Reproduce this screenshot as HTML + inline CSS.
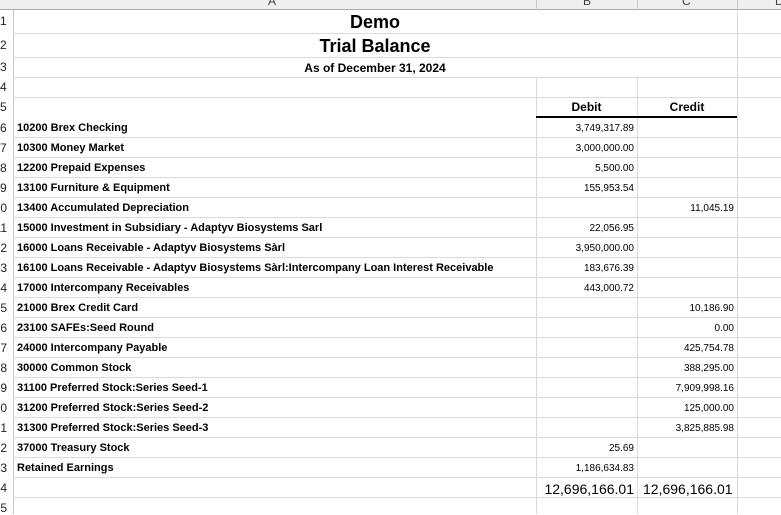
<!DOCTYPE html>
<html><head><style>
body{margin:0;width:781px;height:514px;overflow:hidden;background:#fff;font-family:"Liberation Sans",Arial,sans-serif;position:relative}
.a{position:absolute}
.hl{position:absolute;left:13px;width:768px;height:1px;background:#dadada}
.vl{position:absolute;width:1px;background:#dadada}
.rn{position:absolute;left:0;width:7px;overflow:hidden;direction:rtl;text-align:left;font-size:12px;color:#222;white-space:nowrap}
.t{position:absolute;left:17px;font-size:11px;font-weight:bold;white-space:nowrap;color:#000}
.n{position:absolute;font-size:10px;text-align:right;white-space:nowrap;color:#000}
</style></head><body>
<div class="a" style="left:0;top:0;width:781px;height:9px;background:#efefef;border-bottom:1px solid #ababab"></div>
<div class="a" style="left:268px;top:-6px;font-size:12px;color:#444">A</div>
<div class="a" style="left:583px;top:-6px;font-size:12px;color:#444">B</div>
<div class="a" style="left:682px;top:-6px;font-size:12px;color:#444">C</div>
<div class="a" style="left:775px;top:-6px;font-size:12px;color:#444">D</div>
<div class="vl" style="left:536px;top:0;height:10px;background:#c8c8c8"></div>
<div class="vl" style="left:637px;top:0;height:10px;background:#c8c8c8"></div>
<div class="vl" style="left:737px;top:0;height:10px;background:#c8c8c8"></div>
<div class="vl" style="left:13px;top:10px;height:504px;background:#c8c8c8"></div>
<div class="vl" style="left:536px;top:77px;height:437px"></div>
<div class="vl" style="left:637px;top:77px;height:437px"></div>
<div class="vl" style="left:737px;top:10px;height:504px"></div>
<div class="hl" style="top:33px"></div>
<div class="hl" style="top:57px"></div>
<div class="hl" style="top:77px"></div>
<div class="hl" style="top:97px"></div>
<div id="lines"></div>
<div class="a" style="left:536px;top:116px;width:201px;height:2px;background:#000"></div>
<div class="a" style="left:13px;top:11px;width:724px;text-align:center;font-size:18px;font-weight:bold;line-height:23px">Demo</div>
<div class="a" style="left:13px;top:35px;width:724px;text-align:center;font-size:18px;font-weight:bold;line-height:23px">Trial Balance</div>
<div class="a" style="left:13px;top:58px;width:724px;text-align:center;font-size:12px;font-weight:bold;line-height:20px">As of December 31, 2024</div>
<div class="a" style="left:536px;top:98px;width:101px;text-align:center;font-size:12px;font-weight:bold;line-height:19px">Debit</div>
<div class="a" style="left:637px;top:98px;width:100px;text-align:center;font-size:12px;font-weight:bold;line-height:19px">Credit</div>
<div class="rn" style="top:14px">1</div>
<div class="rn" style="top:38px">2</div>
<div class="rn" style="top:60px">3</div>
<div class="rn" style="top:80px">4</div>
<div class="rn" style="top:100px">5</div>
<script>
var rows=[
["10200 Brex Checking","3,749,317.89",""],
["10300 Money Market","3,000,000.00",""],
["12200 Prepaid Expenses","5,500.00",""],
["13100 Furniture & Equipment","155,953.54",""],
["13400 Accumulated Depreciation","","11,045.19"],
["15000 Investment in Subsidiary - Adaptyv Biosystems Sarl","22,056.95",""],
["16000 Loans Receivable - Adaptyv Biosystems Sàrl","3,950,000.00",""],
["16100 Loans Receivable - Adaptyv Biosystems Sàrl:Intercompany Loan Interest Receivable","183,676.39",""],
["17000 Intercompany Receivables","443,000.72",""],
["21000 Brex Credit Card","","10,186.90"],
["23100 SAFEs:Seed Round","","0.00"],
["24000 Intercompany Payable","","425,754.78"],
["30000 Common Stock","","388,295.00"],
["31100 Preferred Stock:Series Seed-1","","7,909,998.16"],
["31200 Preferred Stock:Series Seed-2","","125,000.00"],
["31300 Preferred Stock:Series Seed-3","","3,825,885.98"],
["37000 Treasury Stock","25.69",""],
["Retained Earnings","1,186,634.83",""]];
var h="";
for(var i=0;i<rows.length;i++){var y=117+i*20;var r=rows[i];
h+='<div class="hl" style="top:'+(y+20)+'px"></div>';
h+='<div class="rn" style="top:'+(y+4)+'px">'+(6+i)+'</div>';
h+='<div class="t" style="top:'+(y+5)+'px">'+r[0].replace("&","&amp;")+'</div>';
if(r[1])h+='<div class="n" style="left:536px;width:98px;top:'+(y+6)+'px">'+r[1]+'</div>';
if(r[2])h+='<div class="n" style="left:637px;width:97px;top:'+(y+6)+'px">'+r[2]+'</div>';}
h+='<div class="hl" style="top:497px"></div>';
h+='<div class="rn" style="top:481px">24</div><div class="rn" style="top:501px">25</div>';
h+='<div class="n" style="left:536px;width:98px;top:481px;font-size:14px">12,696,166.01</div>';
h+='<div class="n" style="left:637px;width:97px;top:481px;font-size:14px;text-align:left;padding-left:6px">12,696,166.01</div>';
document.getElementById("lines").innerHTML=h;
</script>
</body></html>
